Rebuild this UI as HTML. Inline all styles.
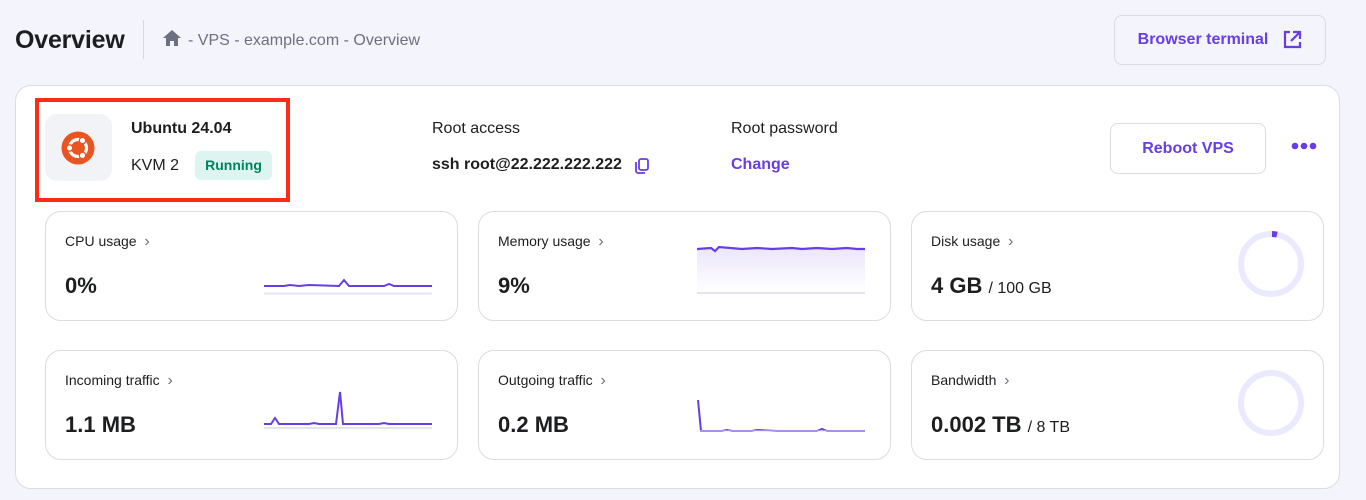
<!DOCTYPE html>
<html><head><meta charset="utf-8"><style>
*{box-sizing:border-box;margin:0;padding:0}
body{width:1366px;height:500px;background:#f4f4fd;font-family:"Liberation Sans",sans-serif;color:#1d1e20;position:relative;overflow:hidden}
.abs{position:absolute}
.title{left:15px;top:26px;font-size:25px;font-weight:bold;letter-spacing:-0.2px}
.sep{left:143px;top:20px;width:1px;height:39px;background:#d8d8e0}
.crumb{left:188px;top:32px;font-size:16px;color:#6d7081}
.btn{border:1px solid #dadce0;border-radius:8px;color:#673de6;font-weight:bold;font-size:16px;display:flex;align-items:center;justify-content:center}
.main{left:15px;top:85px;width:1325px;height:404px;background:#fff;border:1px solid #dadce0;border-radius:16px}
.card{width:413px;height:110px;border:1px solid #dadce0;border-radius:16px;background:#fff}
.lab{font-size:14px;color:#1d1e20}
.lab span{color:#6d7081;font-size:16px}
.val{font-size:22px;font-weight:bold}
.val small{font-size:16px;font-weight:normal}
</style></head><body>
<div class="abs title">Overview</div>
<div class="abs sep"></div>
<svg class="abs" style="left:162px;top:29px" width="20" height="18" viewBox="0 0 20 18"><path d="M10 1 L1 9 H4 V17 H8 V12 H12 V17 H16 V9 H19 Z" fill="#6d7081"/></svg>
<div class="abs crumb">- VPS - example.com - Overview</div>
<div class="abs btn" style="left:1114px;top:15px;width:212px;height:50px;background:#f4f4fd">Browser terminal
<svg style="margin-left:14px" width="20" height="20" viewBox="0 0 20 20" fill="none" stroke="#673de6" stroke-width="2.2"><path d="M8 2H3v15h15v-5"/><path d="M11 2h7v7M18 2L9 11"/></svg></div>

<div class="abs main"></div>
<div class="abs" style="left:35px;top:98px;width:255px;height:104px;border:4px solid #fe2c16"></div>
<div class="abs" style="left:45px;top:114px;width:67px;height:67px;background:#f2f3f6;border-radius:12px"></div>
<svg class="abs" style="left:61px;top:131px" width="34" height="34" viewBox="0 0 34 34"><circle cx="17" cy="17" r="16.5" fill="#e95420"/><circle cx="17" cy="17" r="8.5" fill="none" stroke="#fff" stroke-width="3.2"/><circle cx="8.5" cy="17" r="3.2" fill="#fff" stroke="#e95420" stroke-width="1.3"/><circle cx="21.5" cy="9.6" r="3.2" fill="#fff" stroke="#e95420" stroke-width="1.3"/><circle cx="21.5" cy="24.4" r="3.2" fill="#fff" stroke="#e95420" stroke-width="1.3"/></svg>
<div class="abs" style="left:131px;top:120px;font-size:16px;font-weight:bold">Ubuntu 24.04</div>
<div class="abs" style="left:131px;top:157px;font-size:16px">KVM 2</div>
<div class="abs" style="left:195px;top:151px;width:77px;height:29px;background:#def4f0;border-radius:6px;color:#008361;font-weight:bold;font-size:14px;text-align:center;line-height:29px">Running</div>
<div class="abs" style="left:432px;top:120px;font-size:16px">Root access</div>
<div class="abs" style="left:432px;top:156px;font-size:16px;font-weight:bold">ssh root@22.222.222.222</div>
<svg class="abs" style="left:633px;top:157px" width="18" height="18" viewBox="0 0 18 18" fill="none" stroke="#673de6" stroke-width="1.8"><rect x="6" y="2" width="9" height="11" rx="2"/><path d="M3 5v9a2 2 0 0 0 2 2h7"/></svg>
<div class="abs" style="left:731px;top:120px;font-size:16px">Root password</div>
<div class="abs" style="left:731px;top:156px;font-size:16px;font-weight:bold;color:#673de6">Change</div>
<div class="abs btn" style="left:1110px;top:123px;width:156px;height:51px;background:#fff">Reboot VPS</div>
<svg class="abs" style="left:1291px;top:142px" width="28" height="8"><circle cx="4" cy="4" r="3.3" fill="#673de6"/><circle cx="13" cy="4" r="3.3" fill="#673de6"/><circle cx="22" cy="4" r="3.3" fill="#673de6"/></svg>

<div class="abs card" style="left:45px;top:211px"></div>
<div class="abs card" style="left:478px;top:211px"></div>
<div class="abs card" style="left:911px;top:211px"></div>
<div class="abs card" style="left:45px;top:350px"></div>
<div class="abs card" style="left:478px;top:350px"></div>
<div class="abs card" style="left:911px;top:350px"></div>

<div class="abs lab" style="left:65px;top:233px">CPU usage &nbsp;<span>›</span></div>
<div class="abs lab" style="left:498px;top:233px">Memory usage &nbsp;<span>›</span></div>
<div class="abs lab" style="left:931px;top:233px">Disk usage &nbsp;<span>›</span></div>
<div class="abs lab" style="left:65px;top:372px">Incoming traffic &nbsp;<span>›</span></div>
<div class="abs lab" style="left:498px;top:372px">Outgoing traffic &nbsp;<span>›</span></div>
<div class="abs lab" style="left:931px;top:372px">Bandwidth &nbsp;<span>›</span></div>

<div class="abs val" style="left:65px;top:273px">0%</div>
<div class="abs val" style="left:498px;top:273px">9%</div>
<div class="abs val" style="left:931px;top:273px">4 GB <small>/ 100 GB</small></div>
<div class="abs val" style="left:65px;top:412px">1.1 MB</div>
<div class="abs val" style="left:498px;top:412px">0.2 MB</div>
<div class="abs val" style="left:931px;top:412px">0.002 TB <small>/ 8 TB</small></div>

<svg class="abs" style="left:264px;top:270px" width="170" height="30"><line x1="0" y1="23.5" x2="168" y2="23.5" stroke="#e3e3f3" stroke-width="2"/><polyline fill="none" stroke="#673de6" stroke-width="2" points="0,16 20,16 26,15 35,16 45,15 75,16 80,10 85,16 120,16 125,14 130,16 160,16 168,16"/></svg>
<svg class="abs" style="left:697px;top:240px" width="170" height="58"><defs><linearGradient id="g" x1="0" y1="0" x2="0" y2="1"><stop offset="0" stop-color="#ebe6fc"/><stop offset="1" stop-color="#fff"/></linearGradient></defs><path d="M0 9 L14 8 L18 11 L22 7 L45 9 L60 8 L75 9 L95 8 L105 9 L120 8 L135 9 L150 8 L160 9 L168 9 V53 H0Z" fill="url(#g)"/><polyline fill="none" stroke="#673de6" stroke-width="2.2" points="0,9 14,8 18,11 22,7 45,9 60,8 75,9 95,8 105,9 120,8 135,9 150,8 160,9 168,9"/><line x1="0" y1="53" x2="168" y2="53" stroke="#e3e3f3" stroke-width="2"/></svg>
<svg class="abs" style="left:264px;top:385px" width="170" height="45"><line x1="0" y1="43" x2="168" y2="43" stroke="#e3e3f3" stroke-width="2"/><polyline fill="none" stroke="#673de6" stroke-width="2" points="0,39 7,39 11,33 15,39 30,39 45,39 50,38 55,39 72,39 76,7 79,39 90,39 115,39 120,38 125,39 168,39"/></svg>
<svg class="abs" style="left:697px;top:398px" width="170" height="36"><polyline fill="none" stroke="#673de6" stroke-width="2" points="1,2 4,33 25,33 30,32 35,33 55,33 60,32 80,33 95,33 120,33 125,31 130,33 168,33"/><line x1="0" y1="33" x2="168" y2="33" stroke="#e3e3f3" stroke-width="1"/></svg>

<svg class="abs" style="left:1237px;top:230px" width="68" height="68"><circle cx="34" cy="34" r="30" fill="none" stroke="#ebe9fd" stroke-width="6"/><path d="M35 4 A30 30 0 0 1 40 4.6" fill="none" stroke="#673de6" stroke-width="6"/></svg>
<svg class="abs" style="left:1237px;top:369px" width="68" height="68"><circle cx="34" cy="34" r="30" fill="none" stroke="#ebe9fd" stroke-width="6"/></svg>
</body></html>
